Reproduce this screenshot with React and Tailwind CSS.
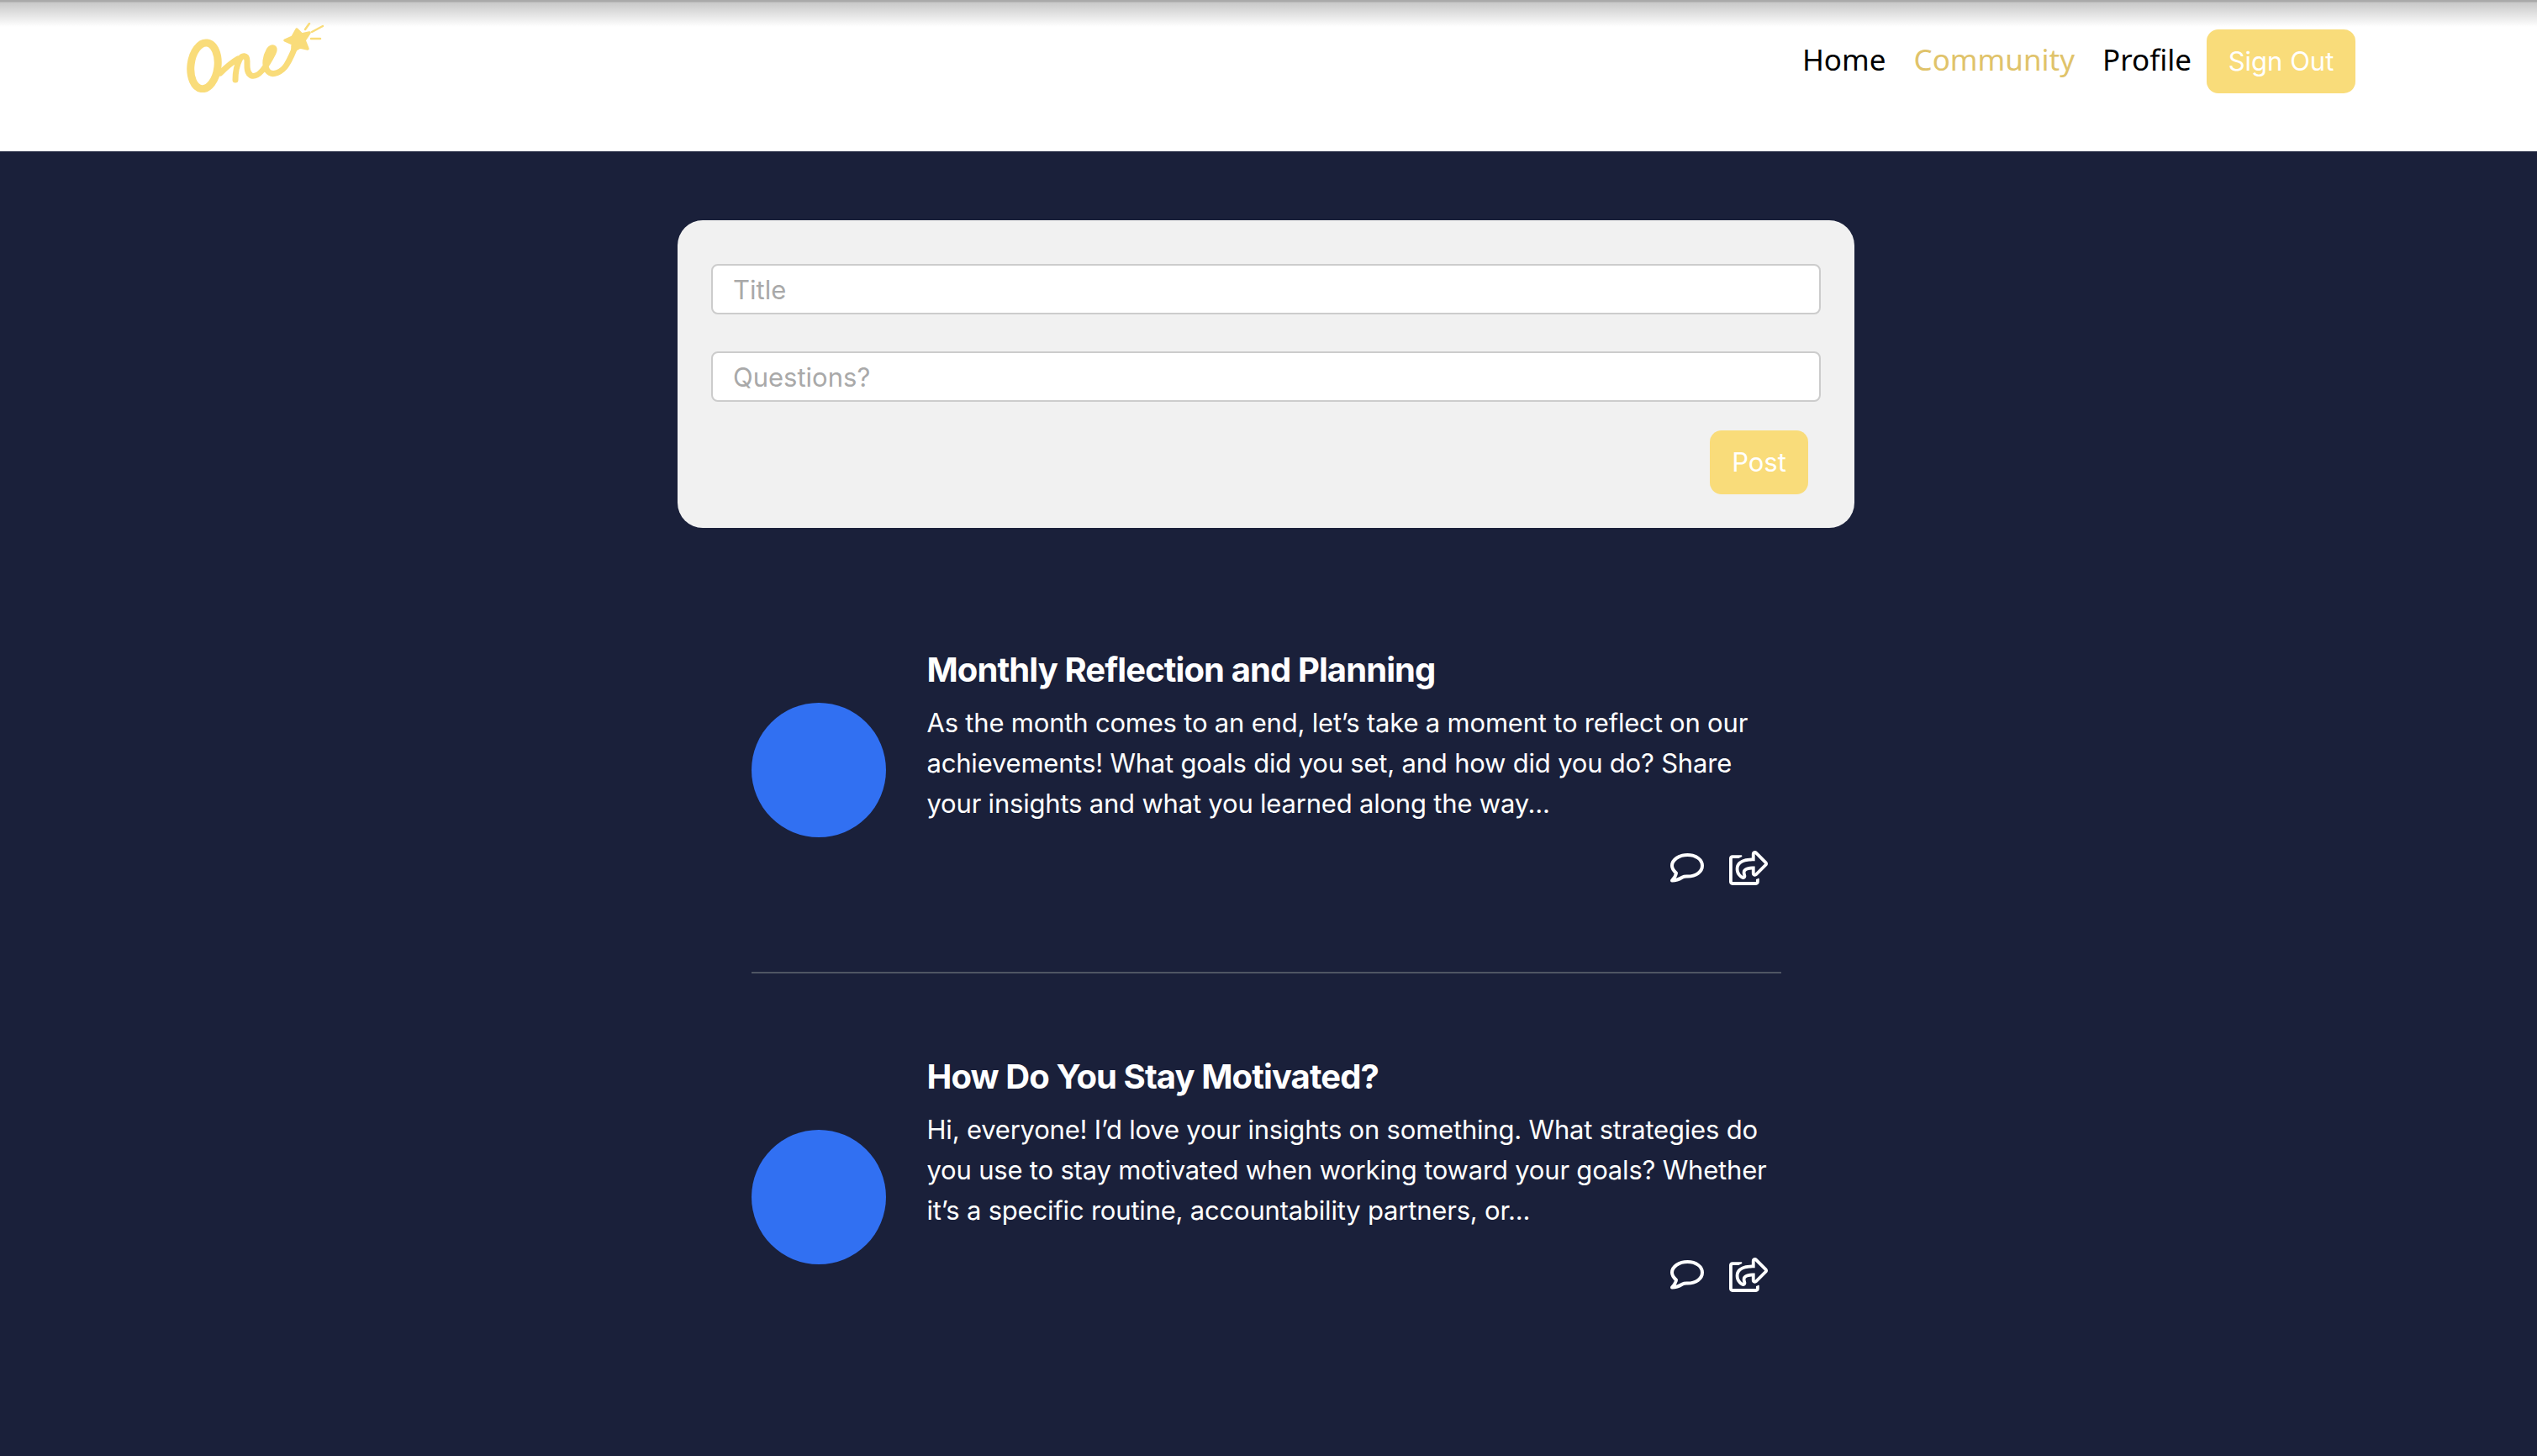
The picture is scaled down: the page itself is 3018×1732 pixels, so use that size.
import { FaRegShareSquare } from 'react-icons/fa';

const posts = [
  {
    title: 'Monthly Reflection and Planning',
    body: 'As the month comes to an end, let’s take a moment to reflect on our achievements! What goals did you set, and how did you do? Share your insights and what you learned along the way...',
    avatarOffset: 'mt-[64px]',
  },
  {
    title: 'How Do You Stay Motivated?',
    body: 'Hi, everyone! I’d love your insights on something. What strategies do you use to stay motivated when working toward your goals? Whether it’s a specific routine, accountability partners, or...',
    avatarOffset: 'mt-[88px]',
  },
];

function Logo() {
  return (
    <svg width="163" height="83" viewBox="0 0 163 83" fill="none" stroke="#f9dc7a" strokeLinecap="round" strokeLinejoin="round">
      <ellipse cx="21" cy="51.3" rx="16" ry="27.5" transform="rotate(7 21 51.3)" strokeWidth="9" />
      <path
        d="M40 60 C46 54 54 47 61 43 M58 68 C58 60 60 50 63 44 C66 38 72 38 72 46 C72 52 71 60 77 63 C86 66 96 50 103 36 C106 30 102 27 98 33 C94 40 92 50 96 57 C102 65 114 58 119 50 C124 42 128 32 131 24"
        strokeWidth="7"
      />
      <path
        d="M131 8 L137 14 L146 12 L140 21 L144 31 L135 29 L126 34 L126 25 L117 21 L126 17 Z"
        fill="#f9dc7a"
        strokeWidth="3.5"
      />
      <path d="M141 8 L146 1 M149 11 L162 4 M148 19 L159 19" strokeWidth="2.5" />
    </svg>
  );
}

function CommentIcon() {
  return (
    <svg width="40" height="35" viewBox="0 0 40 35" fill="none" stroke="currentColor" strokeWidth="4" strokeLinejoin="round">
      <path d="M14.5 28.5 C10.5 31 6 32.5 2 32.5 C4.5 30 6.5 27 7 23.5 C3.8 20.8 2 17.8 2 14.8 C2 7.7 10.3 2 20.5 2 C30.7 2 38 7.7 38 14.8 C38 21.9 30.7 27.6 20.5 27.6 C18.4 27.6 16.4 27.4 14.5 28.5 Z" />
    </svg>
  );
}

function Post({ post, divider }) {
  return (
    <article className={`w-[1225px] h-[484px] flex flex-col pt-[98px] ${divider ? 'border-b-2 border-[#4f5663]' : ''}`}>
      <div className="flex items-start gap-[49px] pr-4">
        <div className={`w-[160px] h-[160px] rounded-full bg-[#3170f2] shrink-0 ${post.avatarOffset}`} />
        <div className="flex-1">
          <h2 className="text-[40px] leading-[50px] font-bold tracking-[-0.9px] text-white">{post.title}</h2>
          <p className="mt-[14px] text-[31px] leading-[48px] tracking-[-0.2px] text-white">{post.body}</p>
          <div className="flex justify-end items-center gap-[30px] mt-[32px] text-white">
            <CommentIcon />
            <FaRegShareSquare className="w-[46px] h-[41px]" />
          </div>
        </div>
      </div>
    </article>
  );
}

export default function App() {
  return (
    <div className="min-h-[1732px] bg-[#1a203a] font-['Inter',sans-serif]">
      <header className="h-[180px] flex items-start justify-between pl-[222px] pr-[216px] pt-[27px] bg-[linear-gradient(to_bottom,#a9a9a9_0px,#a9a9a9_2px,#c8c8c8_3px,#ffffff_32px)]">
        <Logo />
        <nav className="flex items-center gap-[33px] pt-[8px] font-['Noto_Sans',sans-serif] text-[35px] leading-[68px] text-black">
          <a className="pb-[4px]">Home</a>
          <a className="pb-[4px] text-[#e0c36a]">Community</a>
          <a className="pb-[4px]">Profile</a>
          <button className="-ml-[15px] w-[177px] h-[76px] rounded-[14px] bg-[#f9dc7a] font-['Inter',sans-serif] text-white text-[31px] leading-[76px]">Sign Out</button>
        </nav>
      </header>

      <main className="flex flex-col items-center pr-[6px]">
        <section className="w-[1400px] h-[366px] mt-[82px] rounded-[30px] bg-[#f1f1f1] px-[40px] pt-[52px] flex flex-col">
          <input
            placeholder="Title"
            className="w-full h-[60px] rounded-[8px] border-2 border-[#cccccc] bg-white px-[24px] text-[31px] placeholder:text-[#a9a9a9]"
          />
          <input
            placeholder="Questions?"
            className="w-full h-[60px] mt-[44px] rounded-[8px] border-2 border-[#cccccc] bg-white px-[24px] text-[31px] placeholder:text-[#a9a9a9]"
          />
          <button className="self-end mr-[15px] mt-[34px] w-[117px] h-[76px] rounded-[14px] bg-[#f9dc7a] text-white text-[31px]">Post</button>
        </section>

        <section className="mt-[46px]">
          {posts.map((post, i) => (
            <Post key={post.title} post={post} divider={i === 0} />
          ))}
        </section>
      </main>
    </div>
  );
}
